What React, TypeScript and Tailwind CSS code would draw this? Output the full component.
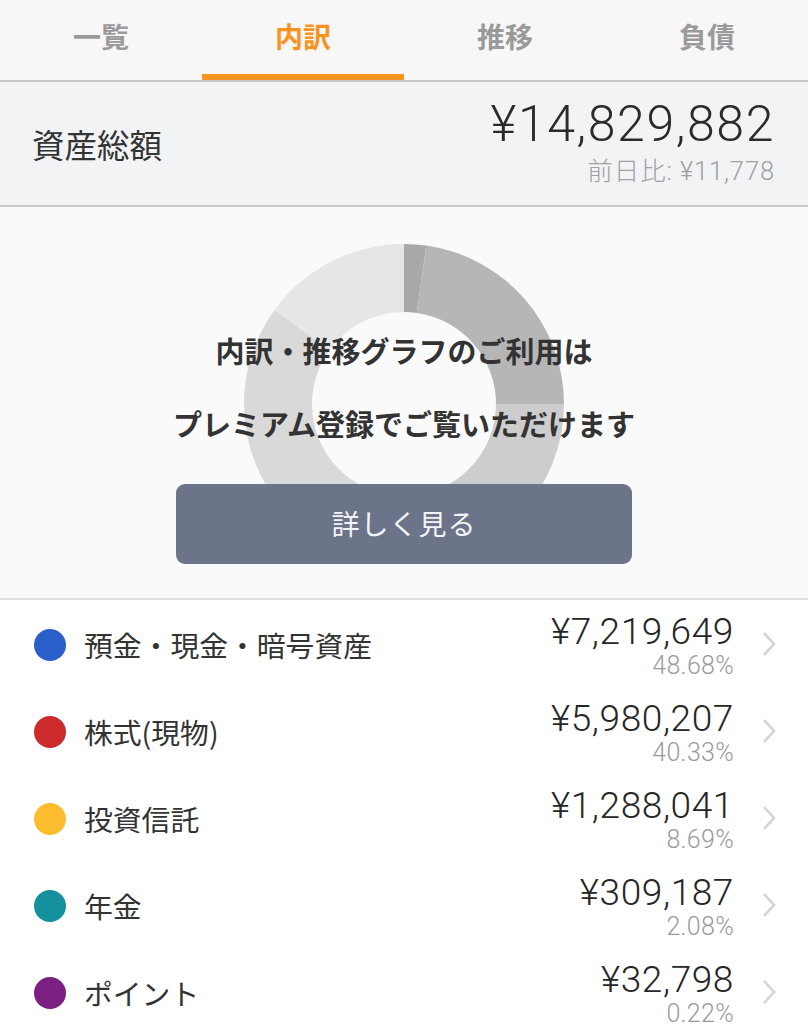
import React from "react";

const JP = { fontFamily: '"Noto Sans CJK JP", "Noto Sans", sans-serif' };
const NUM = { fontFamily: 'Roboto, "Noto Sans CJK JP", sans-serif' };

const tabs = ["一覧", "内訳", "推移", "負債"];

const rows = [
  { label: "預金・現金・暗号資産", amount: "¥7,219,649", pct: "48.68%", color: "bg-[#2a5fcb]" },
  { label: "株式(現物)", amount: "¥5,980,207", pct: "40.33%", color: "bg-[#cc2a2c]" },
  { label: "投資信託", amount: "¥1,288,041", pct: "8.69%", color: "bg-[#fbbd2e]" },
  { label: "年金", amount: "¥309,187", pct: "2.08%", color: "bg-[#15909d]" },
  { label: "ポイント", amount: "¥32,798", pct: "0.22%", color: "bg-[#7b1f82]" },
];

function arc(cx: number, cy: number, r0: number, r1: number, a0: number, a1: number) {
  const rad = (a: number) => ((a - 90) * Math.PI) / 180;
  const p = (r: number, a: number) => [cx + r * Math.cos(rad(a)), cy + r * Math.sin(rad(a))];
  const [x0, y0] = p(r1, a0);
  const [x1, y1] = p(r1, a1);
  const [x2, y2] = p(r0, a1);
  const [x3, y3] = p(r0, a0);
  const large = a1 - a0 > 180 ? 1 : 0;
  return `M${x0} ${y0} A${r1} ${r1} 0 ${large} 1 ${x1} ${y1} L${x2} ${y2} A${r0} ${r0} 0 ${large} 0 ${x3} ${y3} Z`;
}

function Donut() {
  const segs = [
    { a0: 0, a1: 8, c: "#a9a9a9" },
    { a0: 8, a1: 90, c: "#b6b6b6" },
    { a0: 90, a1: 180, c: "#cdcdcd" },
    { a0: 180, a1: 306, c: "#d9d9d9" },
    { a0: 306, a1: 360, c: "#e6e6e6" },
  ];
  return (
    <svg width="320" height="320" viewBox="0 0 320 320">
      {segs.map((s, i) => (
        <path key={i} d={arc(160, 160, 92, 160, s.a0, s.a1)} fill={s.c} />
      ))}
    </svg>
  );
}

export default function App() {
  return (
    <div className="w-[808px] h-[1024px] overflow-hidden bg-white" style={JP}>
      {/* Tabs */}
      <div className="flex h-[82px] bg-[#f7f7f7] border-b-2 border-[#c9c9c9]">
        {tabs.map((t, i) => (
          <div key={t} className="flex-1 flex flex-col items-center">
            <div
              className={`h-[74px] flex items-center justify-center text-[28px] font-bold ${
                i === 1 ? "text-[#f7931e]" : "text-[#9a9a9a]"
              }`}
            >
              <span className="-mt-[2px]">{t}</span>
            </div>
            <div className={`h-[6px] w-full ${i === 1 ? "bg-[#f7931e]" : ""}`} />
          </div>
        ))}
      </div>

      {/* Total */}
      <div className="flex items-start justify-between h-[125px] bg-[#f2f3f5] border-b-2 border-[#c9c9c9] pl-[32px] pr-[33px]">
        <div className="text-[32.5px] text-[#333] mt-[41px] leading-[42px]">資産総額</div>
        <div className="flex flex-col items-end mt-[13px]">
          <div className="text-[50px] leading-[58px] font-light text-[#2b2b2b] tracking-[1.6px]" style={NUM}>
            ¥14,829,882
          </div>
          <div className="text-[25.5px] leading-[30px] font-light text-[#a0a0a0] mt-[3px] tracking-[0.9px]" style={NUM}>
            前日比: ¥11,778
          </div>
        </div>
      </div>

      {/* Chart */}
      <div className="relative h-[393px] bg-[#fafafa] border-b-2 border-[#dedede] flex flex-col items-center overflow-hidden">
        <div className="absolute left-[244px] top-[37px]">
          <Donut />
        </div>
        <div className="relative flex flex-col items-center pt-[122px]">
          <div className="text-[29px] font-bold text-[#333] leading-[42px]">内訳・推移グラフのご利用は</div>
          <div className="text-[29px] font-bold text-[#333] leading-[42px] mt-[31px]">
            プレミアム登録でご覧いただけます
          </div>
          <div className="mt-[40px] w-[456px] h-[80px] rounded-[9px] bg-[#6b7489] flex items-center justify-center text-[28px] text-[#f3f4f7] tracking-[1px]">
            <span className="-mt-[2px]">詳しく見る</span>
          </div>
        </div>
      </div>

      {/* List */}
      <div className="flex flex-col">
        {rows.map((r) => (
          <div key={r.label} className="flex items-center h-[87px] pl-[34px] pr-[32px]">
            <div className={`w-[32px] h-[32px] rounded-full ${r.color} mt-[2px]`} />
            <div className="ml-[18px] flex-1 text-[28.8px] text-[#333] mt-[2px]">{r.label}</div>
            <div className="flex flex-col items-end mt-[4px]">
              <div className="text-[37px] leading-[40px] font-light text-[#262626] tracking-[0.6px]" style={NUM}>
                {r.amount}
              </div>
              <div className="text-[25px] leading-[28px] font-light text-[#9a9a9f] tracking-[0.3px]" style={NUM}>
                {r.pct}
              </div>
            </div>
            <svg className="ml-[28px]" width="14" height="26" viewBox="0 0 14 26">
              <path d="M2 2 L12 13 L2 24" fill="none" stroke="#d3d3d3" strokeWidth="2.6" />
            </svg>
          </div>
        ))}
      </div>
    </div>
  );
}
